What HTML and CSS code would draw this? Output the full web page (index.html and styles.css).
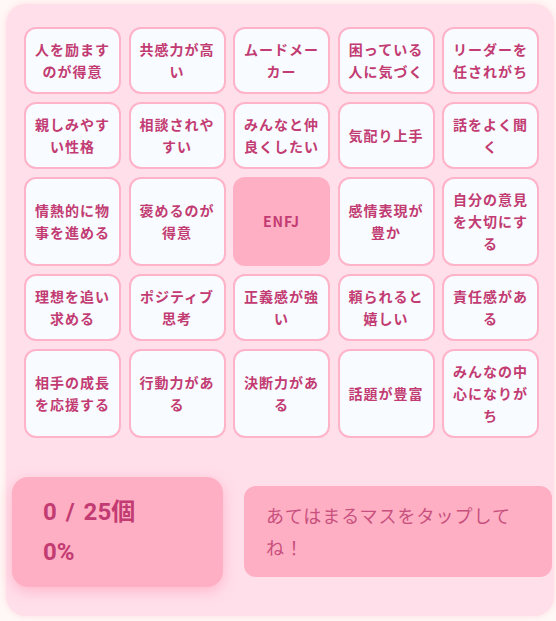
FILE: index.html
```html
<!DOCTYPE html>
<html lang="ja">
<head>
<meta charset="utf-8">
<title>ENFJ あるあるビンゴ</title>
<link rel="stylesheet" href="styles.css">
</head>
<body>
<div class="card">
  <div class="grid">
    <div class="cell">人を励ますのが得意</div>
    <div class="cell">共感力が高い</div>
    <div class="cell">ムードメーカー</div>
    <div class="cell">困っている人に気づく</div>
    <div class="cell">リーダーを任されがち</div>
    <div class="cell">親しみやすい性格</div>
    <div class="cell">相談されやすい</div>
    <div class="cell">みんなと仲良くしたい</div>
    <div class="cell">気配り上手</div>
    <div class="cell">話をよく聞く</div>
    <div class="cell">情熱的に物事を進める</div>
    <div class="cell">褒めるのが得意</div>
    <div class="cell free">ENFJ</div>
    <div class="cell">感情表現が豊か</div>
    <div class="cell">自分の意見を大切にする</div>
    <div class="cell">理想を追い求める</div>
    <div class="cell">ポジティブ思考</div>
    <div class="cell">正義感が強い</div>
    <div class="cell">頼られると嬉しい</div>
    <div class="cell">責任感がある</div>
    <div class="cell">相手の成長を応援する</div>
    <div class="cell">行動力がある</div>
    <div class="cell">決断力がある</div>
    <div class="cell">話題が豊富</div>
    <div class="cell">みんなの中心になりがち</div>
  </div>
  <div class="bottom">
    <div class="stats">
      <div class="count">0 / 25個</div>
      <div class="percent">0%</div>
    </div>
    <div class="message">あてはまるマスをタップしてね！</div>
  </div>
</div>
</body>
</html>
```
FILE: styles.css
```css
html, body {
  margin: 0;
  padding: 0;
  background: #fff8f6;
}
body {
  font-family: "Noto Sans CJK JP", "Noto Sans", sans-serif;
  color: #c23b72;
}
.card {
  margin: 4px 2px 5px 6px;
  background: #ffdfea;
  border-radius: 20px;
  padding: 23px 15px 29px 18px;
  box-shadow: 0 0 6px rgba(255, 190, 205, 0.45);
}
.grid {
  display: grid;
  grid-template-columns: repeat(5, 1fr);
  column-gap: 7.5px;
  row-gap: 8px;
}
.cell {
  display: flex;
  align-items: center;
  justify-content: center;
  text-align: center;
  background: #f8fbff;
  border: 2px solid #ffb3c9;
  border-radius: 12px;
  padding: 9px 7px;
  font-size: 14px;
  font-weight: 700;
  line-height: 22.4px;
  letter-spacing: 1px;
  color: #c23b72;
}
.cell.free {
  background: #ffafc3;
  border-color: #ffafc3;
}
.bottom {
  display: flex;
  align-items: center;
  gap: 21px;
  margin: 39px -13px 0 -12px;
}
.stats {
  width: 211px;
  flex: none;
  box-sizing: border-box;
  padding: 15px 31px;
  background: #ffafc3;
  border-radius: 16px;
  box-shadow: 0 4px 14px rgba(255, 150, 180, 0.55);
  font-family: Roboto, "Noto Sans CJK JP", sans-serif;
  font-size: 24px;
  font-weight: 700;
  line-height: 40px;
  word-spacing: 3px;
  color: #c23b72;
}
.message {
  flex: 1;
  padding: 14px 22px;
  background: #ffafc3;
  border-radius: 12px;
  font-size: 18px;
  line-height: 31.5px;
  letter-spacing: 1px;
  color: #c8507e;
}
```
